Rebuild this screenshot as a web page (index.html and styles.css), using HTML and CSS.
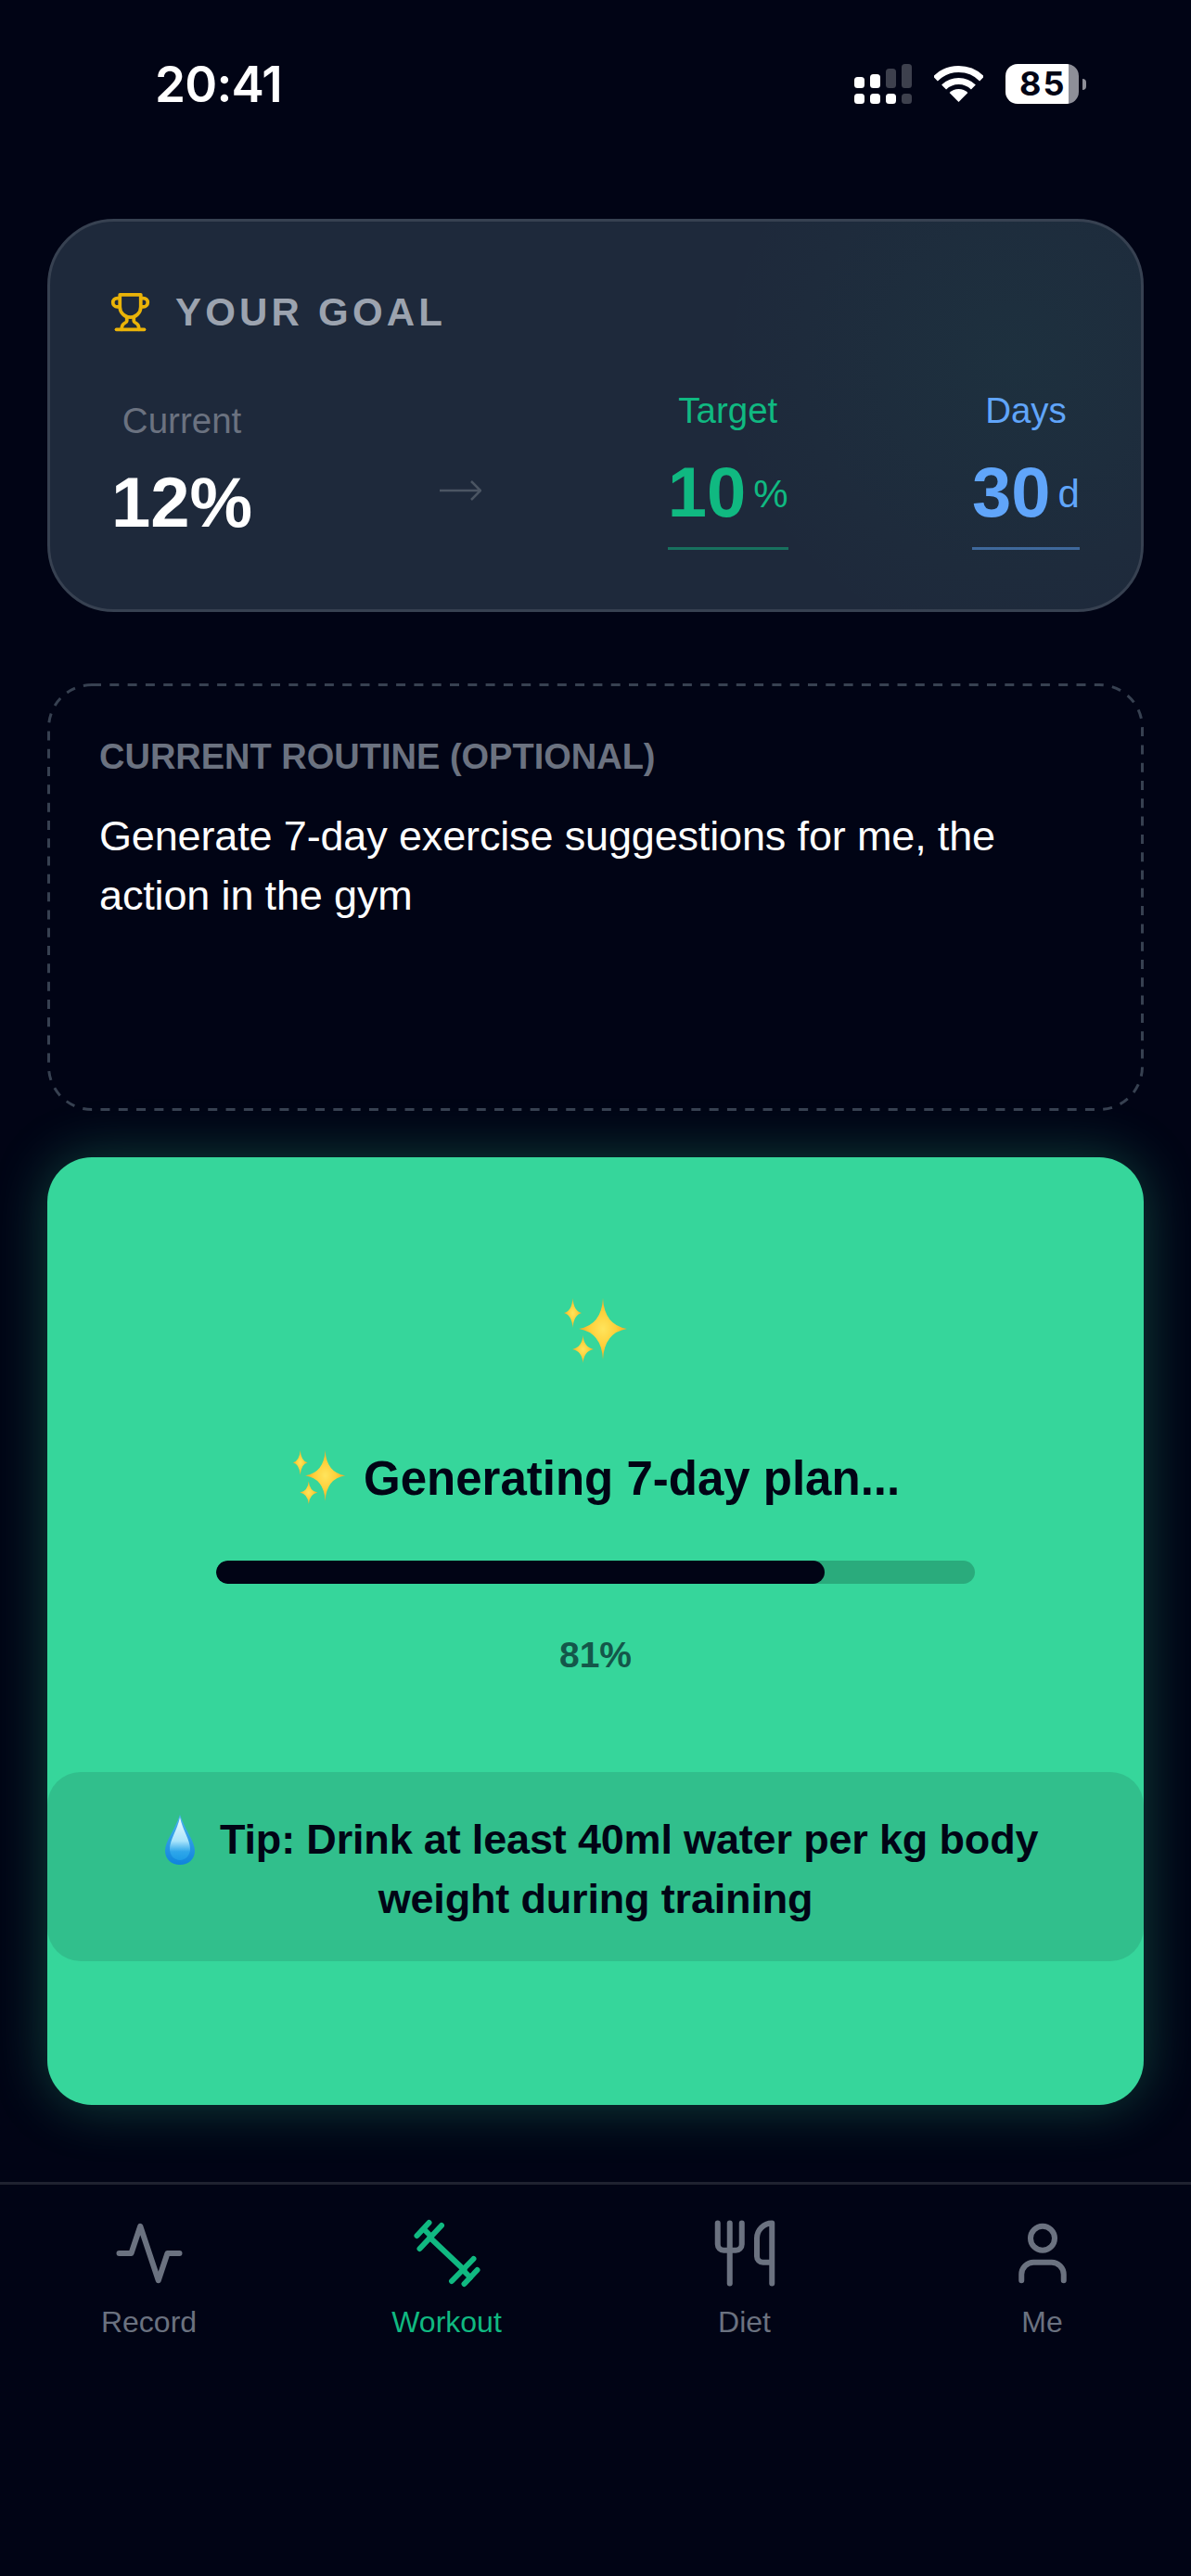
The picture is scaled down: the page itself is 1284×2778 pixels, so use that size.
FILE: index.html
```html
<!DOCTYPE html>
<html lang="en">
<head>
    <meta charset="UTF-8">
    <meta name="viewport" content="width=device-width, initial-scale=1.0">
    <title>Workout plan</title>
    <link rel="stylesheet" href="styles.css">
</head>
<body>
    <svg class="defs" width="0" height="0">
        <defs>
            <radialGradient id="star">
                <stop offset="0" stop-color="#ffe45c"/>
                <stop offset="0.55" stop-color="#ffcf3a"/>
                <stop offset="1" stop-color="#f5a623"/>
            </radialGradient>
            <linearGradient id="drop" x1="0" y1="0" x2="0" y2="1">
                <stop offset="0" stop-color="#f2fbff"/>
                <stop offset="0.55" stop-color="#a9e4fb"/>
                <stop offset="0.8" stop-color="#2ea6ea"/>
                <stop offset="1" stop-color="#1c9be6"/>
            </linearGradient>
            <linearGradient id="dropEdge" x1="0" y1="0" x2="0" y2="1">
                <stop offset="0" stop-color="#4cb4ee"/>
                <stop offset="1" stop-color="#0f84dc"/>
            </linearGradient>
            <symbol id="sparkles" viewBox="0 0 68 70">
                <path fill="url(#star)" d="M42 0Q43.500 29 68 33Q43.500 37 42 66Q40.500 37 16 33Q40.500 29 42 0Z"/>
                <path fill="url(#star)" d="M9.500 0Q10.500 14 19 16Q10.500 18 9.500 32Q8.500 18 0 16Q8.500 14 9.500 0Z"/>
                <path fill="url(#star)" d="M20.500 40Q21.500 53 32 55Q21.500 57 20.500 70Q19.500 57 9 55Q19.500 53 20.500 40Z"/>
            </symbol>
        </defs>
    </svg>

    <div class="status">
        <div class="time">20:41</div>
        <div class="status-icons">
            <svg class="cell" viewBox="0 0 62 43">
                <rect x="0" y="14" width="11" height="12" rx="3.500" fill="#fff"/>
                <rect x="17" y="11" width="11" height="15" rx="3.500" fill="#fff"/>
                <rect x="34" y="5" width="11" height="21" rx="3.500" fill="#3d404d"/>
                <rect x="51" y="0" width="11" height="26" rx="3.500" fill="#3d404d"/>
                <rect x="0" y="32" width="11" height="11" rx="3.500" fill="#fff"/>
                <rect x="17" y="32" width="11" height="11" rx="3.500" fill="#fff"/>
                <rect x="34" y="32" width="11" height="11" rx="3.500" fill="#fff"/>
                <rect x="51" y="32" width="11" height="11" rx="3.500" fill="#3d404d"/>
            </svg>
            <svg class="wifi" viewBox="0 0 53 39">
                <path d="M1.400 13.900A35.500 35.500 0 0 1 51.600 13.900" fill="none" stroke="#fff" stroke-width="7"/>
                <path d="M10.600 23.100A22.500 22.500 0 0 1 42.400 23.100" fill="none" stroke="#fff" stroke-width="7"/>
                <path d="M26.500 39L16.600 29.100A14 14 0 0 1 36.400 29.100Z" fill="#fff"/>
            </svg>
            <div class="battery">
                <div class="battery-body">85</div>
                <div class="battery-nub"></div>
            </div>
        </div>
    </div>

    <div class="main">
        <div class="goal">
            <div class="goal-title">
                <svg class="trophy" viewBox="0 0 24 24">
                    <path d="M6 9H4.500a2.500 2.500 0 0 1 0-5H6"/>
                    <path d="M18 9h1.500a2.500 2.500 0 0 0 0-5H18"/>
                    <path d="M4 22h16"/>
                    <path d="M10 14.660V17c0 .550-.470.980-.970 1.210C7.850 18.750 7 20.240 7 22"/>
                    <path d="M14 14.660V17c0 .550.470.980.970 1.210C16.150 18.750 17 20.240 17 22"/>
                    <path d="M18 2H6v7a6 6 0 0 0 12 0V2Z"/>
                </svg>
                <span>YOUR GOAL</span>
            </div>
            <div class="goal-row">
                <div class="col current">
                    <div class="col-label">Current</div>
                    <div class="col-value">12%</div>
                </div>
                <svg class="arrow" viewBox="0 0 45 22">
                    <path d="M0 11H44M34 1L44 11L34 21"/>
                </svg>
                <div class="col target">
                    <div class="col-label">Target</div>
                    <div class="col-value">10<span class="unit">%</span></div>
                </div>
                <div class="col days">
                    <div class="col-label">Days</div>
                    <div class="col-value">30<span class="unit">d</span></div>
                </div>
            </div>
        </div>

        <div class="routine">
            <svg class="routine-border" viewBox="0 0 1182 461">
                <rect x="1.500" y="1.500" width="1179" height="458" rx="46.500"/>
            </svg>
            <div class="routine-label">CURRENT ROUTINE (OPTIONAL)</div>
            <div class="routine-text">Generate 7-day exercise suggestions for me, the action in the gym</div>
        </div>

        <div class="loading">
            <svg class="sparkle-top"><use href="#sparkles"/></svg>
            <div class="loading-title"><svg class="sparkle-inline"><use href="#sparkles"/></svg> Generating 7-day plan...</div>
            <div class="track"><div class="fill" style="width: 80.2%"></div></div>
            <div class="percent">81%</div>
            <div class="tip">
                <svg class="drop" viewBox="0 0 60 60">
                    <path fill="url(#dropEdge)" d="M29 3C24 19 13 31 13 42C13 51 20 57 29 57C38 57 45 51 45 42C45 31 34 19 29 3Z"/>
                    <path fill="url(#drop)" d="M29 6C26 20 18 30 18 40C18 47 23 52 29 52C35 52 40 47 40 40C40 30 32 20 29 6Z"/>
                </svg> Tip: Drink at least 40ml water per kg body weight during training
            </div>
        </div>
    </div>

    <div class="tabbar">
        <div class="tab">
            <svg class="tab-icon" viewBox="0 0 24 24"><path d="M2 12h4l3-9 6 18 3-9h4"/></svg>
            <div class="tab-label">Record</div>
        </div>
        <div class="tab active">
            <svg class="tab-icon dumbbell" viewBox="0 0 78 78">
                <path d="M20.500 22L57.500 57"/>
                <path d="M33 9L9.500 34"/>
                <path d="M19.500 6L6.500 20"/>
                <path d="M14 13L20 19"/>
                <path d="M67.500 45L44 69"/>
                <path d="M71.500 57L57.500 72"/>
                <path d="M58 59L64 65"/>
            </svg>
            <div class="tab-label">Workout</div>
        </div>
        <div class="tab">
            <svg class="tab-icon" viewBox="0 0 24 24">
                <path d="M3 2v7c0 1.100.900 2 2 2h4a2 2 0 0 0 2-2V2"/>
                <path d="M7 2v20"/>
                <path d="M21 15V2a5 5 0 0 0-5 5v6c0 1.100.900 2 2 2h3Zm0 0v7"/>
            </svg>
            <div class="tab-label">Diet</div>
        </div>
        <div class="tab">
            <svg class="tab-icon" viewBox="0 0 24 24">
                <path d="M19 21v-2a4 4 0 0 0-4-4H9a4 4 0 0 0-4 4v2"/>
                <circle cx="12" cy="7" r="4"/>
            </svg>
            <div class="tab-label">Me</div>
        </div>
    </div>
</body>
</html>
```

FILE: styles.css
```css
*{
    margin: 0px;
    padding: 0px;
    box-sizing: border-box;
}
body{
    width: 1284px;
    height: 2778px;
    overflow: hidden;
    background-color: #010415;
    font-family: "Liberation Sans", Arial, sans-serif;
    color: #fff;
}
.defs{
    display: block;
    height: 0;
}

/* status bar */
.status{
    display: flex;
    justify-content: space-between;
    align-items: center;
    height: 236px;
    padding: 69px 113px 124px 167px;
}
.time{
    font-family: Inter, "Liberation Sans", sans-serif;
    font-size: 53px;
    font-weight: 600;
    letter-spacing: -0.8px;
}
.status-icons{
    display: flex;
    align-items: center;
    gap: 24px;
}
.cell{
    width: 62px;
    height: 43px;
}
.wifi{
    width: 53px;
    height: 39px;
}
.battery{
    display: flex;
    align-items: center;
    gap: 4px;
}
.battery-body{
    width: 79px;
    height: 43px;
    border-radius: 13px;
    background: linear-gradient(90deg, #fff 86%, #8e8f98 86%);
    color: #010415;
    font-family: Inter, "Liberation Sans", sans-serif;
    font-size: 36px;
    font-weight: 700;
    line-height: 43px;
    letter-spacing: 2px;
    padding-left: 15px;
}
.battery-nub{
    width: 4px;
    height: 12px;
    border-radius: 0 6px 6px 0;
    background-color: #8e8f98;
}

/* cards */
.main{
    padding: 0 51px;
}
.goal{
    height: 424px;
    padding: 66px;
    border: 3px solid #374151;
    border-radius: 72px;
    background: radial-gradient(circle 320px at 1040px 150px, rgba(16,185,129,0.05), rgba(16,185,129,0)), #1e293b;
}
.goal-title{
    display: flex;
    align-items: center;
    height: 63px;
    gap: 26px;
    color: #9ca3af;
    font-size: 42px;
    font-weight: bold;
    letter-spacing: 0.1em;
}
.trophy{
    width: 45px;
    height: 45px;
    margin-left: -2px;
    fill: none;
    stroke: #eab308;
    stroke-width: 2;
    stroke-linecap: round;
    stroke-linejoin: round;
}
.goal-row{
    display: flex;
    justify-content: space-between;
    align-items: center;
    margin-top: 46px;
}
.col{
    text-align: center;
}
.col-label{
    font-size: 38.500px;
    line-height: 58px;
}
.col-value{
    margin-top: 20px;
    font-size: 76px;
    font-weight: bold;
    line-height: 78px;
}
.unit{
    margin-left: 8px;
    font-size: 42px;
    font-weight: normal;
    line-height: 1;
    vertical-align: 10px;
}
.current{
    padding-bottom: 2px;
}
.current .col-label{
    color: #6b7280;
}
.arrow{
    width: 45px;
    height: 22px;
    margin: 50px 2px 0 4px;
    fill: none;
    stroke: #4b5563;
    stroke-width: 2.500;
}
.target,
.days{
    padding-bottom: 20px;
    border-bottom: 3px solid;
}
.target{
    color: #10b981;
    border-color: rgba(16,185,129,0.5);
}
.days{
    color: #60a5fa;
    border-color: rgba(96,165,250,0.5);
}

.routine{
    position: relative;
    height: 461px;
    margin-top: 77px;
    padding: 50px 56px;
}
.routine-border{
    position: absolute;
    top: 0;
    left: 0;
    width: 100%;
    height: 100%;
    fill: none;
    stroke: #374151;
    stroke-width: 3;
    stroke-dasharray: 10 9.300;
}
.routine-label{
    color: #6b7280;
    font-size: 38px;
    font-weight: bold;
    line-height: 58px;
}
.routine-text{
    margin-top: 25px;
    font-size: 45px;
    line-height: 64px;
    letter-spacing: -0.15px;
}

.loading{
    display: flex;
    flex-direction: column;
    align-items: center;
    height: 1022px;
    margin-top: 50px;
    padding-top: 150px;
    border-radius: 48px;
    background-color: #36d69b;
    box-shadow: 0 0 60px rgba(52,211,153,0.3);
    color: #010415;
}
.sparkle-top{
    width: 68px;
    height: 70px;
    margin-top: 2px;
}
.loading-title{
    margin-top: 89px;
    font-size: 51px;
    font-weight: bold;
    line-height: 72px;
    white-space: nowrap;
}
.sparkle-inline{
    width: 60px;
    height: 58px;
    margin-right: 4px;
    vertical-align: -10px;
}
.track{
    width: 818px;
    height: 25px;
    margin-top: 52px;
    border-radius: 13px;
    background-color: #2aab7c;
    overflow: hidden;
}
.fill{
    height: 25px;
    border-radius: 13px;
    background-color: #010415;
}
.percent{
    margin-top: 48px;
    color: #14574a;
    font-size: 39px;
    font-weight: bold;
    line-height: 58px;
}
.tip{
    width: 100%;
    margin-top: 97px;
    padding: 41px 90px 35px;
    border-radius: 36px;
    background-color: #31bf8c;
    font-size: 45px;
    font-weight: bold;
    line-height: 64px;
    letter-spacing: -0.17px;
    text-align: center;
}
.drop{
    width: 60px;
    height: 60px;
    vertical-align: -15px;
}

/* tab bar */
.tabbar{
    display: flex;
    margin-top: 83px;
    padding-top: 35px;
    border-top: 3px solid #1f2230;
}
.tab{
    flex: 1;
    display: flex;
    flex-direction: column;
    align-items: center;
    color: #6b7280;
}
.tab-icon{
    width: 78px;
    height: 78px;
    fill: none;
    stroke: currentColor;
    stroke-width: 1.85;
    stroke-linecap: round;
    stroke-linejoin: round;
}
.dumbbell{
    stroke-width: 6;
}
.tab-label{
    margin-top: 11px;
    font-size: 32px;
    line-height: 48px;
}
.active{
    color: #10b981;
}
```
